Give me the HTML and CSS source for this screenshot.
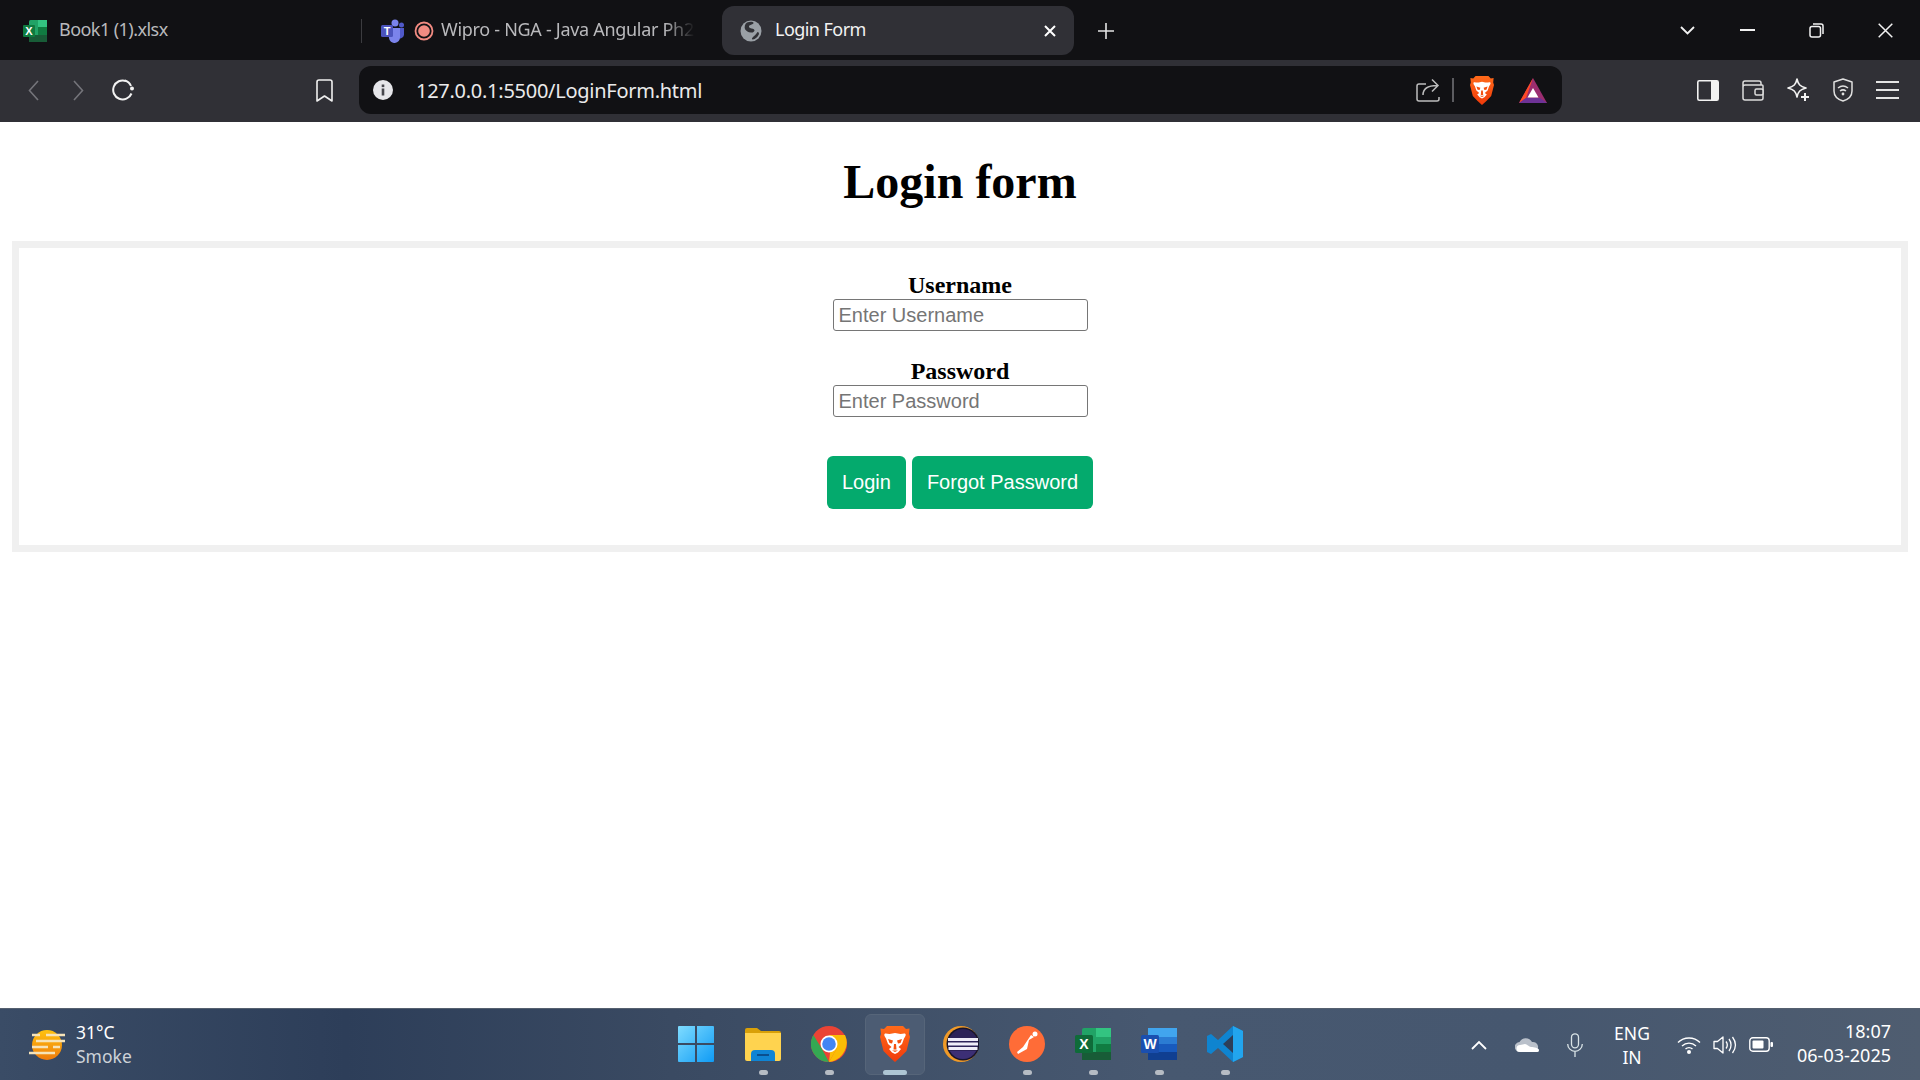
FILE: index.html
```html
<!DOCTYPE html>
<html>
<head>
	<title>Login Form</title>
	<link rel="stylesheet" href="styles.css">
</head>
<body>
	<svg class="defs" width="0" height="0">
		<defs>
			<linearGradient id="braveGrad" x1="0" y1="0" x2="0" y2="1">
				<stop offset="0" stop-color="#ff6a1a"/>
				<stop offset="1" stop-color="#f03a0a"/>
			</linearGradient>
			<symbol id="brave" viewBox="0 0 30 36">
				<path fill="url(#braveGrad)" d="M7 0h16l3 3 3.500-.5L29 8l1 3-3.500 14-6 6-5.500 5-5.500-5-6-6L0 11l1-3-.5-5.500L4 3z"/>
				<path fill="#fff" d="M15 7c-2 0-3.500 1-5.500 1S5.500 7 4.500 8c-.8 1 .5 3 1.500 4.500L8 18l3.500 3-2.500 2 3 3.500L15 28l3-1.500 3-3.500-2.500-2 3.500-3 2-5.500c1-1.500 2.300-3.500 1.500-4.500-1-1-3-.0-5 0S17 7 15 7z"/>
				<path fill="#f4500f" d="M8 13l5 1.500-1 3-2.500-.5zM22 13l-5 1.500 1 3 2.500-.5zM14 18h2l.5 5.500h-3z"/>
				<path fill="#f4500f" d="M12 24.500h6l-3 1.500z"/>
			</symbol>
		</defs>
	</svg>

	<header class="chrome">
		<div class="tabstrip">
			<div class="tab tab-first">
				<svg class="tab-icon" width="25" height="24" viewBox="0 0 25 24"><rect x="7" y="1" width="18" height="22" rx="1.500" fill="#21a366"/><rect x="16" y="1" width="9" height="7" fill="#33c481"/><rect x="16" y="8" width="9" height="8" fill="#107c41"/><rect x="7" y="16" width="18" height="7" fill="#185c37"/><rect x="1" y="6" width="12" height="12" rx="1" fill="#0f7b3f"/><text x="7" y="15.500" class="badge-letter">X</text></svg>
				<span class="tab-title">Book1 (1).xlsx</span>
			</div>
			<div class="tab tab-second">
				<svg class="teams" width="24" height="24" viewBox="0 0 24 24"><circle cx="14" cy="4" r="3.500" fill="#7b83eb"/><circle cx="20.500" cy="6" r="2.500" fill="#5059c9"/><path d="M16 9h7v7a4 4 0 0 1-7 2z" fill="#5059c9"/><path d="M7 9h12v9a5.500 5.500 0 0 1-11 1z" fill="#7b83eb"/><rect x="0" y="6" width="12" height="12" rx="1.500" fill="#4b53bc"/><text x="6" y="15.500" class="badge-letter">T</text></svg>
				<svg class="record" width="20" height="20" viewBox="0 0 20 20"><circle cx="10" cy="10" r="8.500" fill="none" stroke="#f28b82" stroke-width="1.800"/><circle cx="10" cy="10" r="5.800" fill="#f28b82"/></svg>
				<span class="tab-title tab-fade">Wipro - NGA - Java Angular Ph2</span>
			</div>
			<div class="tab tab-active">
				<svg width="22" height="22" viewBox="0 0 22 22"><circle cx="11" cy="11" r="10.500" fill="#9aa0a6"/><path fill="#303136" d="M7 2.500c3-1 6-.8 6.500.2.400 1-1.500 1.800-3 2.300-2 .6-2 2.200-.5 3 2 1 4 .5 4.500 2.200.3 1.300-1.500 2.500-3.500 2.300-3-.3-4.500-1.500-6-3.300C4.200 7 4.800 4 7 2.500zM17.500 12c1.200.2 1.800 1 1.300 2.500-1 2.500-3.500 4.800-6 5-1 0-1.200-1-.2-2 1.500-1.500 3.300-3 4.900-5.500z"/></svg>
				<span class="tab-title active-title">Login Form</span>
				<svg class="tab-close" width="12" height="12" viewBox="0 0 12 12"><path d="M1 1l10 10M11 1L1 11" stroke="#fff" stroke-width="2"/></svg>
			</div>
			<svg class="new-tab" width="16" height="16" viewBox="0 0 16 16"><path d="M8 0v16M0 8h16" stroke="#e4e4e4" stroke-width="1.600"/></svg>
			<div class="window-controls">
				<svg class="win-chevron" width="15" height="9" viewBox="0 0 15 9"><path d="M1 1l6.500 6.500L14 1" fill="none" stroke="#f2f2f2" stroke-width="1.800"/></svg>
				<svg class="win-min" width="15" height="2" viewBox="0 0 15 2"><rect width="15" height="2" fill="#f2f2f2"/></svg>
				<svg class="win-restore" width="15" height="15" viewBox="0 0 15 15"><rect x="1" y="3.500" width="10.500" height="10.500" rx="2" fill="none" stroke="#f2f2f2" stroke-width="1.500"/><path d="M4 1h8a2 2 0 0 1 2 2v8" fill="none" stroke="#f2f2f2" stroke-width="1.500"/></svg>
				<svg class="win-close" width="15" height="15" viewBox="0 0 15 15"><path d="M.7.7l13.600 13.600M14.300.7L.7 14.300" stroke="#f2f2f2" stroke-width="1.500"/></svg>
			</div>
		</div>

		<div class="toolbar">
			<div class="nav-group">
				<svg width="11" height="21" viewBox="0 0 11 21"><path d="M10 1L1.500 10.500 10 20" fill="none" stroke="#74747a" stroke-width="1.600"/></svg>
				<svg class="nav-forward" width="11" height="21" viewBox="0 0 11 21"><path d="M1 1l8.500 9.500L1 20" fill="none" stroke="#74747a" stroke-width="1.600"/></svg>
				<svg class="nav-reload" width="23" height="22" viewBox="0 0 23 22"><path d="M19.500 14.500A9.500 9.500 0 1 1 14 2" fill="none" stroke="#f2f2f2" stroke-width="2"/><path d="M13 1.500c2 .6 5 3 6 5.500" fill="none" stroke="#f2f2f2" stroke-width="2"/><circle cx="20" cy="9.500" r="2" fill="#f2f2f2"/></svg>
			</div>
			<svg class="bookmark" width="17" height="23" viewBox="0 0 17 23"><path d="M1 3a2 2 0 0 1 2-2h11a2 2 0 0 1 2 2v19l-7.500-5L1 22z" fill="none" stroke="#f0f0f0" stroke-width="1.600" stroke-linejoin="round"/></svg>
			<div class="urlbar">
				<svg class="info" width="20" height="20" viewBox="0 0 20 20"><circle cx="10" cy="10" r="10" fill="#e6e6ea"/><rect x="8.700" y="8.500" width="2.600" height="7" fill="#46464c"/><rect x="8.700" y="4.500" width="2.600" height="2.600" fill="#46464c"/></svg>
				<span class="url-text">127.0.0.1:5500/LoginForm.html</span>
				<svg class="share" width="24" height="24" viewBox="0 0 24 24"><path d="M10 6H3a2 2 0 0 0-2 2v13a2 2 0 0 0 2 2h18a2 2 0 0 0 2-2v-2" fill="none" stroke="#bdbdbd" stroke-width="1.500"/><path d="M7 17c0-6 5-9.500 14-9.500M16 1.500l6 6-6 6" fill="none" stroke="#bdbdbd" stroke-width="1.500"/></svg>
				<span class="url-divider"></span>
				<svg class="url-brave" width="24" height="29"><use href="#brave"/></svg>
				<svg class="bat" width="28" height="25" viewBox="0 0 28 25"><path d="M14 0L0 25h28z" fill="#9b2d6f"/><path d="M14 0L0 25l7-5z" fill="#ff4a26"/><path d="M0 25l7-5h14l7 5z" fill="#6e3296"/><path d="M14 10l-5.500 9.500h11z" fill="#fff"/></svg>
			</div>
			<div class="tool-group">
				<svg width="22" height="21" viewBox="0 0 22 21"><rect x=".8" y=".8" width="20.400" height="19.400" rx="1.500" fill="none" stroke="#f2f2f2" stroke-width="1.600"/><rect x="14" y="1" width="7" height="19" fill="#f2f2f2"/></svg>
				<svg width="22" height="21" viewBox="0 0 22 21"><path d="M3 1h14a2 2 0 0 1 2 2v2H3a2 2 0 0 0-2 2V3a2 2 0 0 1 2-2zM1 5v13a2 2 0 0 0 2 2h16a2 2 0 0 0 2-2V6a1 1 0 0 0-1-1H3" fill="none" stroke="#dcdcdc" stroke-width="1.500"/><rect x="13" y="9" width="8" height="6" rx="1.500" fill="#303036" stroke="#dcdcdc" stroke-width="1.500"/></svg>
				<svg width="23" height="24" viewBox="0 0 23 24"><path d="M10 1c1.200 5.500 3 7.500 9 9-6 1.500-7.800 3.500-9 9-1.200-5.500-3-7.500-9-9 6-1.500 7.800-3.500 9-9z" fill="none" stroke="#f2f2f2" stroke-width="1.600" stroke-linejoin="round"/><path d="M18 15v8M14 19h8" stroke="#f2f2f2" stroke-width="2"/></svg>
				<svg width="20" height="24" viewBox="0 0 20 24"><path d="M10 1l9 3v9c0 5-4 8.500-9 10-5-1.500-9-5-9-10V4z" fill="none" stroke="#e0e0e0" stroke-width="1.500" stroke-linejoin="round"/><path d="M5 10c3-2.500 7-2.500 10 0M7 13c2-1.500 4-1.500 6 0" fill="none" stroke="#e0e0e0" stroke-width="1.500"/><circle cx="10" cy="16" r="1.400" fill="#e0e0e0"/></svg>
				<svg width="23" height="18" viewBox="0 0 23 18"><path d="M0 1h23M0 9h23M0 17h23" stroke="#e4e4e4" stroke-width="1.800"/></svg>
			</div>
		</div>
	</header>

	<main class="page">
		<h1 class="title">Login form</h1>
		<form class="login-box">
			<label class="field-label" for="username">Username</label>
			<input class="field-input" type="text" id="username" placeholder="Enter Username">
			<label class="field-label label-second" for="password">Password</label>
			<input class="field-input" type="password" id="password" placeholder="Enter Password">
			<div class="actions">
				<button class="btn btn-login" type="button">Login</button>
				<button class="btn btn-forgot" type="button">Forgot Password</button>
			</div>
		</form>
	</main>

	<footer class="taskbar">
		<div class="weather">
			<svg width="36" height="32" viewBox="0 0 36 32"><defs><linearGradient id="sunGrad" x1="0" y1="0" x2="0" y2="1"><stop offset="0" stop-color="#ffc310"/><stop offset="1" stop-color="#ee7a0c"/></linearGradient></defs><circle cx="18" cy="16" r="15" fill="url(#sunGrad)"/><path d="M17 6h19M3 6h8M7 12h29M3 18h16M24 18h7M0 24h26" stroke="#f6e3b8" stroke-width="2.600"/></svg>
			<div class="weather-text">
				<span class="temp">31°C</span>
				<span class="condition">Smoke</span>
			</div>
		</div>
		<div class="apps">
			<div class="app app-start">
				<svg width="36" height="36" viewBox="0 0 36 36"><defs><linearGradient id="winGrad" x1="0" y1="0" x2="1" y2="1"><stop offset="0" stop-color="#7fdcff"/><stop offset="1" stop-color="#0f9bf5"/></linearGradient></defs><path fill="url(#winGrad)" d="M1 0h16v17H0V1a1 1 0 0 1 1-1zM19 0h16a1 1 0 0 1 1 1v16H19zM0 19h17v17H1a1 1 0 0 1-1-1zM19 19h17v16a1 1 0 0 1-1 1H19z"/></svg>
			</div>
			<div class="app">
				<svg width="36" height="34" viewBox="0 0 36 34"><path d="M0 3a2 2 0 0 1 2-2h10l4 3h18a2 2 0 0 1 2 2v4H0z" fill="#d9a008"/><path d="M0 6h36v26a2 2 0 0 1-2 2H2a2 2 0 0 1-2-2z" fill="#ffd34f"/><path d="M6 33V27a4 4 0 0 1 4-4h16a4 4 0 0 1 4 4v7H6z" fill="#0f84d4"/><rect x="12" y="27" width="12" height="2" fill="#0a4f8f"/></svg>
				<span class="dot"></span>
			</div>
			<div class="app">
				<svg width="36" height="36" viewBox="0 0 36 36"><circle cx="18" cy="18" r="18" fill="#ea4335"/><path d="M18 36A18 18 0 0 1 2.400 9L11 23z" fill="#34a853"/><path d="M18 36l8-14 8.500-1A18 18 0 0 1 18 36z" fill="#fbbc05"/><path d="M18 9h16a18 18 0 0 1-1 17l-7-4z" fill="#fbbc05"/><path d="M18 36l8.500-14.500L20 18z" fill="#fbbc05"/><circle cx="18" cy="18" r="8.500" fill="#fff"/><circle cx="18" cy="18" r="6.800" fill="#4285f4"/></svg>
				<span class="dot"></span>
			</div>
			<div class="app app-current">
				<svg width="30" height="36"><use href="#brave"/></svg>
				<span class="dot dot-wide"></span>
			</div>
			<div class="app">
				<svg width="36" height="36" viewBox="0 0 36 36"><circle cx="18" cy="18" r="18" fill="#f09a27"/><circle cx="20" cy="18" r="16.500" fill="#17152b"/><circle cx="20" cy="18" r="15" fill="#2c2258"/><path d="M20 33a15 15 0 0 0 13-8H7a15 15 0 0 0 13 8z" fill="#3c2f75"/><path d="M5 13.500h30M5 18h30M5.500 22.500h29" stroke="#efedf8" stroke-width="2.800"/></svg>
			</div>
			<div class="app">
				<svg width="36" height="36" viewBox="0 0 36 36"><circle cx="18" cy="18" r="18" fill="#ff6c37"/><path d="M22 9l-8 12-6 5 1 2 9-5 2-9 5-3z" fill="#fff"/><circle cx="26" cy="8" r="2.500" fill="#fff"/></svg>
				<span class="dot"></span>
			</div>
			<div class="app">
				<svg width="36" height="36" viewBox="0 0 36 36"><rect x="7" y="2" width="29" height="32" rx="2" fill="#21a366"/><rect x="21" y="2" width="15" height="9" fill="#33c481"/><rect x="21" y="18" width="15" height="8" fill="#107c41"/><rect x="7" y="26" width="29" height="8" fill="#185c37"/><rect x="0" y="9" width="18" height="18" rx="1.500" fill="#0f6b39"/><text x="9" y="23" class="app-letter">X</text></svg>
				<span class="dot"></span>
			</div>
			<div class="app">
				<svg width="36" height="36" viewBox="0 0 36 36"><rect x="7" y="2" width="29" height="32" rx="2" fill="#2b7cd3"/><rect x="7" y="2" width="29" height="9" fill="#41a5ee"/><rect x="7" y="18" width="29" height="8" fill="#185abd"/><rect x="7" y="26" width="29" height="8" fill="#103f91"/><rect x="0" y="9" width="18" height="18" rx="1.500" fill="#1a4fb0"/><text x="9" y="23" class="app-letter">W</text></svg>
				<span class="dot"></span>
			</div>
			<div class="app">
				<svg width="36" height="36" viewBox="0 0 36 36"><path d="M26 0l10 5v26l-10 5-15-14-7 6-4-2v-16l4-2 7 6z" fill="#0f84d0"/><path d="M26 9l-10 9 10 9z" fill="#2d3e58"/><path d="M26 0l10 5v26l-10 5z" fill="#22a5ee"/></svg>
				<span class="dot"></span>
			</div>
		</div>
		<div class="tray">
			<svg class="tray-chevron" width="16" height="10" viewBox="0 0 16 10"><path d="M1 9l7-7 7 7" fill="none" stroke="#fff" stroke-width="1.800"/></svg>
			<svg class="tray-cloud" width="24" height="15" viewBox="0 0 24 15"><path d="M5 15a5 5 0 0 1-.5-10A7 7 0 0 1 17 5a5 5 0 0 1 2 10z" fill="#b9c0ca"/><path d="M5 15a3.500 3.500 0 0 1 0-7c2 0 3.500-1 5-1 2 0 4 3 6 3 3 0 8 1 8 3s-1 2-3 2z" fill="#fff"/></svg>
			<svg class="tray-mic" width="16" height="24" viewBox="0 0 16 24"><rect x="4.500" y=".8" width="7" height="14" rx="3.500" fill="none" stroke="#d9e3e6" stroke-width="1.300"/><path d="M.7 11a7.300 7.300 0 0 0 14.600 0M8 18.500V24" fill="none" stroke="#d9e3e6" stroke-width="1.300"/></svg>
			<div class="lang"><span>ENG</span><span>IN</span></div>
			<div class="tray-status">
				<svg width="24" height="18" viewBox="0 0 24 18"><path d="M1 6.500c6-6 16-6 22 0M5 10c4-3.800 10-3.800 14 0M8.500 13c2-1.800 5-1.800 7 0" fill="none" stroke="#fff" stroke-width="1.400"/><circle cx="12" cy="16" r="2" fill="#fff"/></svg>
				<svg width="24" height="20" viewBox="0 0 24 20"><path d="M1 6.500h3.500L10 2v16l-5.500-4.500H1z" fill="none" stroke="#fff" stroke-width="1.300" stroke-linejoin="round"/><path d="M13 6.500c1.500 2 1.500 5 0 7M16 4c2.700 3.500 2.700 8.500 0 12M19.500 2c3.700 5 3.700 11 0 16" fill="none" stroke="#fff" stroke-width="1.300"/></svg>
				<svg width="24" height="15" viewBox="0 0 24 15"><rect x=".8" y=".8" width="19.400" height="13.400" rx="3" fill="none" stroke="#fff" stroke-width="1.400"/><rect x="3.500" y="3.500" width="11" height="8" rx="1" fill="#fff"/><rect x="21.500" y="5" width="2.500" height="5" rx="1" fill="#fff"/></svg>
			</div>
			<div class="clock"><span>18:07</span><span>06-03-2025</span></div>
		</div>
	</footer>
</body>
</html>
```

FILE: styles.css
```css
* {
	box-sizing: border-box;
}
html, body {
	height: 100%;
}
body {
	margin: 0;
	display: flex;
	flex-direction: column;
	height: 1080px;
	overflow: hidden;
	background: #fff;
	font-family: "Liberation Serif", serif;
}
.defs {
	position: absolute;
}
svg {
	display: block;
	flex-shrink: 0;
}
.badge-letter {
	font-family: "Liberation Sans", sans-serif;
	font-size: 11px;
	font-weight: bold;
	fill: #fff;
	text-anchor: middle;
}
.app-letter {
	font-family: "Liberation Sans", sans-serif;
	font-size: 14px;
	font-weight: bold;
	fill: #fff;
	text-anchor: middle;
}

/* browser chrome */
.chrome {
	flex: none;
	font-family: "Noto Sans", sans-serif;
}
.tabstrip {
	display: flex;
	align-items: center;
	height: 60px;
	background: #111114;
}
.tab {
	display: flex;
	align-items: center;
	flex: none;
	height: 49px;
	margin-top: 1px;
}
.tab-title {
	margin-bottom: 3px;
	font-size: 18px;
	letter-spacing: -0.55px;
	color: #b9b9bc;
	white-space: nowrap;
}
.tab-first {
	width: 361px;
	padding-left: 22px;
}
.tab-first .tab-title {
	margin-left: 12px;
}
.tab-second {
	position: relative;
	width: 361px;
	padding-left: 20px;
}
.tab-second::before {
	content: "";
	position: absolute;
	left: 0;
	top: 13px;
	height: 24px;
	width: 1px;
	background: #3c3c40;
}
.record {
	margin-left: 9px;
}
.tab-fade {
	width: 254px;
	margin-left: 7px;
	letter-spacing: -0.3px;
	overflow: hidden;
	-webkit-mask-image: linear-gradient(to right, #000 88%, transparent 100%);
	mask-image: linear-gradient(to right, #000 88%, transparent 100%);
}
.tab-active {
	width: 352px;
	padding: 0 18px;
	background: #303036;
	border-radius: 12px;
}
.active-title {
	margin-left: 13px;
	color: #f2f2f2;
}
.tab-close {
	margin-left: auto;
}
.new-tab {
	margin-left: 24px;
	margin-bottom: -1px;
}
.window-controls {
	display: flex;
	align-items: center;
	margin-left: auto;
	padding-right: 27px;
}
.win-min {
	margin-left: 45px;
}
.win-restore {
	margin-left: 54px;
}
.win-close {
	margin-left: 54px;
}
.toolbar {
	display: flex;
	align-items: center;
	height: 62px;
	padding: 0 21px 2px 28px;
	background: #303036;
}
.nav-group {
	display: flex;
	align-items: center;
}
.nav-forward {
	margin-left: 34px;
}
.nav-reload {
	margin-left: 28px;
}
.bookmark {
	margin-left: 181px;
}
.urlbar {
	display: flex;
	align-items: center;
	width: 1203px;
	height: 48px;
	margin-left: 26px;
	padding-left: 14px;
	background: #111114;
	border-radius: 12px;
}
.url-text {
	margin-left: 23px;
	font-size: 20px;
	letter-spacing: -0.27px;
	color: #eaeaea;
	white-space: nowrap;
}
.share {
	margin-left: auto;
}
.url-divider {
	width: 2px;
	height: 24px;
	margin-left: 12px;
	background: #5c5c60;
}
.url-brave {
	margin-left: 16px;
}
.bat {
	margin-left: 25px;
	margin-right: 15px;
}
.tool-group {
	display: flex;
	align-items: center;
	gap: 23px;
	margin-left: auto;
}

/* page */
.page {
	flex: 1;
	min-height: 0;
	padding: 0 12px;
}
.title {
	margin: 0;
	padding-top: 31px;
	height: 119px;
	font-size: 48px;
	line-height: 58px;
	font-weight: bold;
	text-align: center;
	color: #000;
}
.login-box {
	display: flex;
	flex-direction: column;
	align-items: center;
	height: 311px;
	padding-top: 23px;
	border: 7px solid #f0f0f0;
}
.field-label {
	font-size: 24px;
	line-height: 28px;
	font-weight: bold;
	color: #000;
}
.label-second {
	margin-top: 26px;
}
.field-input {
	width: 255px;
	height: 32px;
	padding: 0 5px;
	font-family: "Liberation Sans", sans-serif;
	font-size: 20px;
	border: 1px solid #767676;
	border-radius: 3px;
	background: #fff;
}
.field-input::placeholder {
	color: #757575;
}
.actions {
	display: flex;
	gap: 6px;
	margin-top: 39px;
}
.btn {
	height: 53px;
	padding: 0 15px;
	font-family: "Liberation Sans", sans-serif;
	font-size: 20px;
	color: #fff;
	background: #04aa6d;
	border: none;
	border-radius: 6px;
}

/* taskbar */
.taskbar {
	flex: none;
	display: flex;
	align-items: center;
	height: 72px;
	font-family: "Noto Sans", sans-serif;
	color: #fff;
	background: linear-gradient(to right, #3a4c66 0%, #2d3e59 18%, #3a4a62 35%, #475870 60%, #46576f 80%, #4f5d70 100%);
	border-top: 1px solid #55606f;
}
.weather {
	display: flex;
	align-items: center;
	width: 662px;
	padding-left: 28px;
}
.weather svg {
	margin-left: 1px;
}
.weather-text {
	display: flex;
	flex-direction: column;
	margin-left: 11px;
	margin-bottom: 2px;
	font-size: 17.500px;
	line-height: 24px;
}
.condition {
	color: #cdd2d8;
}
.apps {
	display: flex;
}
.app {
	position: relative;
	display: flex;
	align-items: center;
	justify-content: center;
	width: 66px;
	height: 71px;
	padding-bottom: 1px;
}
.app-start {
	width: 68px;
}
.dot {
	position: absolute;
	left: 50%;
	bottom: 5px;
	width: 9px;
	height: 5px;
	margin-left: -4.5px;
	border-radius: 3px;
	background: #b6bcc4;
}
.dot-wide {
	width: 24px;
	margin-left: -12px;
	background: #aec6d4;
}
.app-current::before {
	content: "";
	position: absolute;
	left: 3px;
	right: 3px;
	top: 5px;
	bottom: 5px;
	background: #4c5c73;
	border: 1px solid #566579;
	border-radius: 6px;
}
.app-current svg,
.app-current .dot {
	z-index: 1;
}
.tray {
	display: flex;
	align-items: center;
	flex: 1;
	padding-right: 29px;
}
.tray-chevron {
	margin-left: 213px;
}
.tray-cloud {
	margin-left: 28px;
}
.tray-mic {
	margin-left: 28px;
}
.lang {
	display: flex;
	flex-direction: column;
	align-items: center;
	width: 36px;
	margin-left: 31px;
	font-size: 17.500px;
	line-height: 24px;
}
.tray-status {
	display: flex;
	align-items: center;
	gap: 12px;
	margin-left: 27px;
}
.clock {
	display: flex;
	flex-direction: column;
	align-items: flex-end;
	margin-left: auto;
	margin-bottom: 3px;
	font-size: 18px;
	line-height: 24px;
}
```
